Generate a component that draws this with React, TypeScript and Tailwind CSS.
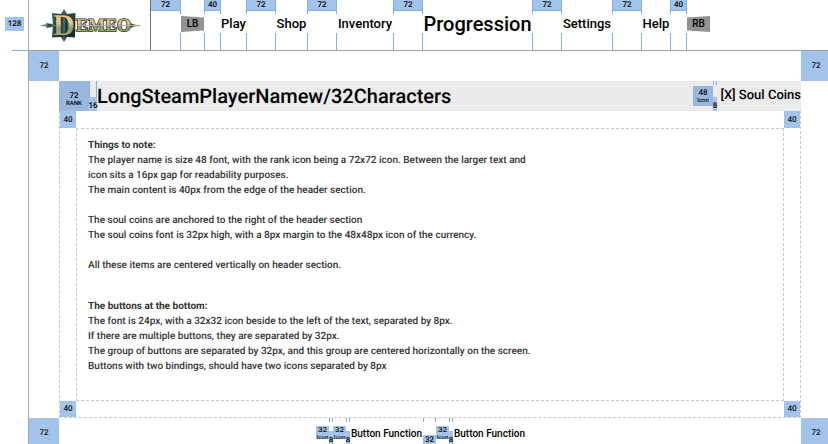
import React from 'react';

const line = 'border-[#82b0ea]';
const blue = 'bg-[#a3c3ea]';

/** Spacing guide between two items of the top bar. */
function NavGap({ size, first = false }: { size: 72 | 40; first?: boolean }) {
  const width = size === 72 ? 'w-[30px]' : 'w-[17px]';
  const sides = first ? 'border-r' : 'border-x';
  return (
    <div className={`flex h-full shrink-0 flex-col justify-between ${width}`} aria-hidden="true">
      <div className={`h-[14px] ${sides} ${line}`}>
        <div className={`flex h-[11px] items-center justify-center border-b pb-px text-[8px] leading-none font-medium ${line} ${blue}`}>{size}</div>
      </div>
      <div className={`h-[17px] ${sides} ${line}`} />
    </div>
  );
}

function NavItem({ label, width, current = false }: { label: string; width: string; current?: boolean }) {
  return (
    <button
      type="button"
      aria-current={current ? 'page' : undefined}
      className={`flex h-[48px] shrink-0 items-center justify-center whitespace-nowrap font-medium ${width} ${current ? 'text-[20px]' : 'text-[13px]'}`}
    >
      {label}
    </button>
  );
}

function Bumper({ label, shape }: { label: string; shape: string }) {
  return (
    <button type="button" className={`mt-4 h-4 w-[23px] shrink-0 self-start bg-[#929292] text-[10px] leading-4 font-medium ${shape}`}>
      {label}
    </button>
  );
}

function Square({ size, className }: { size: number; className: string }) {
  return (
    <div className={`flex shrink-0 items-center justify-center text-[8px] leading-none font-medium text-[#111] ${blue} ${className}`} aria-hidden="true">
      {size}
    </div>
  );
}

/** Narrow gap marker beside an icon. */
function SmallGap({ label, width, block, tick }: { label: string; width: string; block: string; tick: string }) {
  return (
    <div className={`flex shrink-0 flex-col justify-between self-stretch text-[8px] leading-none font-medium ${width}`} aria-hidden="true">
      <div className={`border-x ${line} ${tick}`} />
      <div className={`flex items-end justify-center ${blue} ${block}`}>
        <span>{label}</span>
      </div>
    </div>
  );
}

function KeyIcon() {
  return (
    <span className={`mt-2 flex h-[13px] w-[13px] shrink-0 flex-col items-center text-[#111] ${blue}`}>
      <span className="text-[8px] leading-[8px] font-medium">32</span>
      <span className="text-[6px] leading-[5px] font-medium">Icon</span>
    </span>
  );
}

function Logo() {
  return (
    <svg viewBox="36 6 108 38" className="h-[38px] w-[108px]" role="img" aria-label="Demeo">
      <defs>
        <linearGradient id="gold" x1="0" y1="0" x2="0" y2="1">
          <stop offset="0" stopColor="#dfaa58" />
          <stop offset="0.4" stopColor="#edc98a" />
          <stop offset="0.6" stopColor="#8d9a7c" />
          <stop offset="1" stopColor="#dcb468" />
        </linearGradient>
        <linearGradient id="teal" x1="0" y1="0" x2="1" y2="1">
          <stop offset="0" stopColor="#2f6867" />
          <stop offset="1" stopColor="#0d2428" />
        </linearGradient>
      </defs>
      <path d="M40 25.500 L50 23.500 L54 24 V27 L50 27.500Z" fill="#5b7a66" />
      <path d="M46 22.500 L53 25.500 L46 28.500 L48 25.500Z" fill="#24504f" />
      <path d="M130 23 L134 24.500 L141 25.500 L134 26.500 L130 28Z" fill="#24504f" />
      <path d="M52 13 L61 14 L64 9 L67 14 L75.500 13 L75 37.500 L67 37 L64 42 L61 37 L52 37.500 L53 25Z" fill="url(#teal)" />
      <path d="M64 10 V41 M53 25.500 H62" stroke="#a08446" strokeWidth="0.9" />
      <g fontFamily="'Liberation Serif', serif" fontWeight="700" stroke="#17393a" strokeWidth="1.600" paintOrder="stroke" fill="url(#gold)" strokeLinejoin="round">
        <text x="53" y="35" fontSize="30">D</text>
        <text x="76" y="31" fontSize="18">EMEO</text>
      </g>
      <path d="M77 25.500 H116 M121 25.500 H138" stroke="#d0ac66" strokeWidth="1" />
    </svg>
  );
}

export default function App() {
  return (
    <div className="flex h-screen overflow-hidden bg-white font-['Roboto',sans-serif] text-black [text-rendering:geometricPrecision]">
      <aside className="flex h-[51px] w-[28px] shrink-0 flex-col justify-between" aria-hidden="true">
        <div className={`mt-[17px] ml-[5px] flex h-[14px] w-[19px] items-center justify-center text-[8px] leading-none font-medium ${blue}`}>128</div>
        <div className={`ml-3 border-b ${line}`} />
      </aside>

      <div className="flex min-w-0 flex-1 flex-col border-l border-[#a8a8a8]">
        <header className="flex h-[51px] shrink-0 border-b border-[#a0a0a0]">
          <div className="flex w-[122px] shrink-0 justify-center border-r border-[#707070] pt-[6px]">
            <Logo />
          </div>
          <nav className="flex min-w-0 flex-1">
            <NavGap size={72} first />
            <Bumper label="LB" shape="[clip-path:polygon(0_0,100%_9%,100%_91%,0_100%)]" />
            <NavGap size={40} />
            <NavItem label="Play" width="w-[25px]" />
            <NavGap size={72} />
            <NavItem label="Shop" width="w-[31px]" />
            <NavGap size={72} />
            <NavItem label="Inventory" width="w-[56px]" />
            <NavGap size={72} />
            <NavItem label="Progression" width="w-[109px]" current />
            <NavGap size={72} />
            <NavItem label="Settings" width="w-[50px]" />
            <NavGap size={72} />
            <NavItem label="Help" width="w-[28px]" />
            <NavGap size={40} />
            <Bumper label="RB" shape="[clip-path:polygon(0_9%,100%_0,100%_100%,0_91%)]" />
          </nav>
        </header>

        <div className="flex shrink-0 justify-between">
          <Square size={72} className="h-[30px] w-[30px]" />
          <Square size={72} className="h-[30px] w-[27px] pl-[3px]" />
        </div>

        <main className="mr-[27px] ml-[30px] flex min-h-0 flex-1 flex-col">
          <section className="flex h-[30px] shrink-0 items-center bg-[#ebebeb]">
            <div className="flex h-[30px] w-[30px] shrink-0 flex-col items-center justify-center bg-[#9ab8df] pt-[6px]">
              <span className="text-[8px] leading-[9px] font-medium">72</span>
              <span className="text-[6px] leading-[8px] font-medium">RANK</span>
            </div>
            <SmallGap label="16" width="w-2" tick="h-4" block="h-[14px] pb-px" />
            <h1 className="text-[20px] leading-[30px] font-medium whitespace-nowrap">LongSteamPlayerNamew/32Characters</h1>
            <div className="ml-auto flex h-[30px] shrink-0 items-center">
              <div className="flex h-5 w-5 flex-col items-center justify-center bg-[#9ab8df]">
                <span className="text-[8px] leading-[9px] font-medium">48</span>
                <span className="text-[6px] leading-[7px] font-medium">Icon</span>
              </div>
              <SmallGap label="8" width="w-1" tick="h-1" block="h-[14px] pb-px" />
              <span className="w-[84px] text-right text-[13px] leading-[32px] font-medium whitespace-nowrap">[X] Soul Coins</span>
            </div>
          </section>

          <section className="grid min-h-0 flex-1 grid-cols-[16px_1fr_16px] grid-rows-[17px_1fr_16px] border border-t-0 border-dashed border-[#c8c8c8]">
            <Square size={40} className="col-start-1 row-start-1" />
            <Square size={40} className="col-start-3 row-start-1" />
            <article className="col-start-2 row-start-2 border border-dashed border-[#c8c8c8] px-[11px] pt-[9px] text-[10px] leading-[15px] font-medium text-[#333]">
              <h2 className="font-bold">Things to note:</h2>
              <p>
                The player name is size 48 font, with the rank icon being a 72x72 icon. Between the larger text and
                <br />
                icon sits a 16px gap for readability purposes.
              </p>
              <p>The main content is 40px from the edge of the header section.</p>
              <p className="mt-[15px]">The soul coins are anchored to the right of the header section</p>
              <p>The soul coins font is 32px high, with a 8px margin to the 48x48px icon of the currency.</p>
              <p className="mt-[15px]">All these items are centered vertically on header section.</p>
              <h2 className="mt-[26px] font-bold">The buttons at the bottom:</h2>
              <p>The font is 24px, with a 32x32 icon beside to the left of the text, separated by 8px.</p>
              <p>If there are multiple buttons, they are separated by 32px.</p>
              <p>The group of buttons are separated by 32px, and this group are centered horizontally on the screen.</p>
              <p>Buttons with two bindings, should have two icons separated by 8px</p>
            </article>
            <Square size={40} className="col-start-1 row-start-3" />
            <Square size={40} className="col-start-3 row-start-3" />
          </section>
        </main>

        <footer className="flex h-[26px] shrink-0">
          <Square size={72} className="w-[30px] pt-1" />
          <div className="flex min-w-0 flex-1 justify-center pr-[18px]">
            <button type="button" className="flex items-start text-[10px] leading-[32px] font-medium whitespace-nowrap">
              <KeyIcon />
              <SmallGap label="8" width="w-1" tick="h-1" block="h-[13px]" />
              <KeyIcon />
              <SmallGap label="8" width="w-1" tick="h-1" block="h-[13px]" />
              <span className="h-[26px] w-[73px]">Button Function</span>
            </button>
            <SmallGap label="32" width="w-[13px]" tick="h-1" block="h-[9px]" />
            <button type="button" className="flex items-start text-[10px] leading-[32px] font-medium whitespace-nowrap">
              <KeyIcon />
              <SmallGap label="8" width="w-1" tick="h-1" block="h-[13px]" />
              <span className="h-[26px] w-[73px]">Button Function</span>
            </button>
          </div>
          <Square size={72} className="w-[27px] pt-1 pl-[3px]" />
        </footer>
      </div>
    </div>
  );
}
